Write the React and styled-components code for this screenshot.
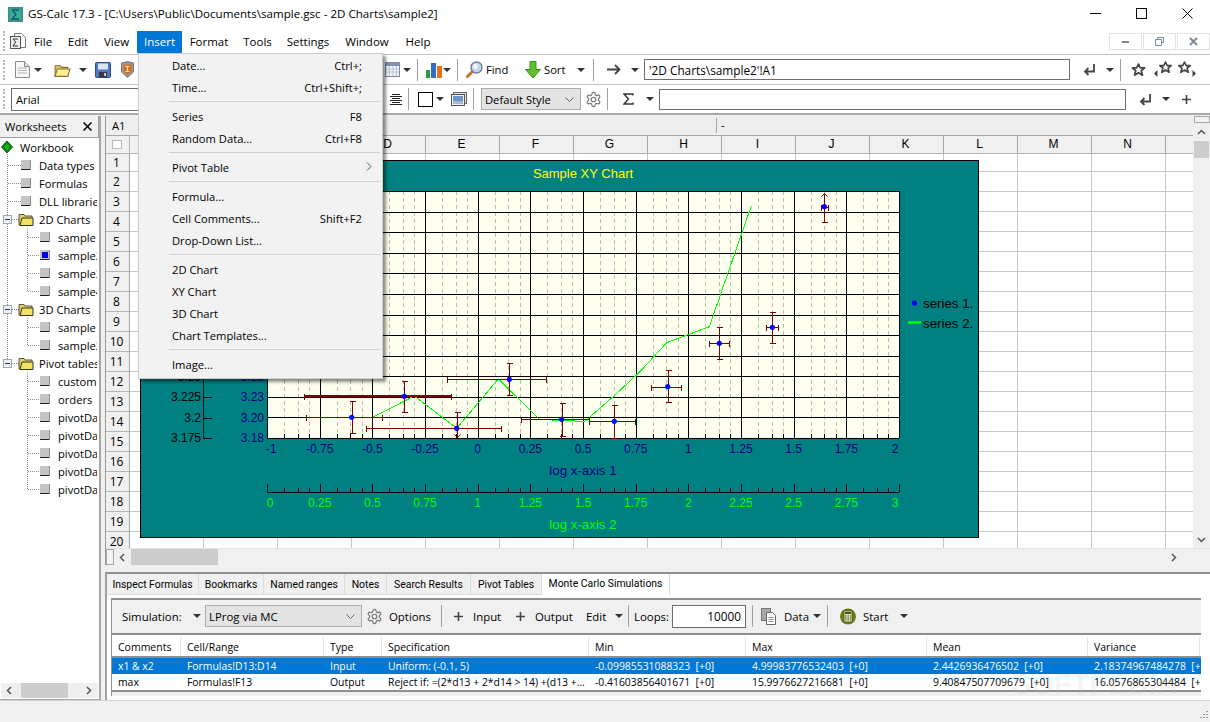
import React from "react";
import styled, { createGlobalStyle } from "styled-components";

const UI = '"Open Sans", "Noto Sans", sans-serif';

const GlobalStyle = createGlobalStyle`
  html, body { margin: 0; padding: 0; background: #f0f0f0; overflow: hidden; }
  body { font-family: ${UI}; font-size: 11.2px; color: #000; }
  * { box-sizing: border-box; }
`;

const Window = styled.div`
  position: relative;
  width: 1210px;
  height: 722px;
  display: flex;
  flex-direction: column;
  overflow: hidden;
  background: #f0f0f0;
`;

const TitleBar = styled.div`
  height: 28px;
  background: #fff;
  display: flex;
  align-items: center;
  padding-left: 8px;
`;
const TitleText = styled.span`
  margin-left: 5px;
  margin-top: -1px;
  font-size: 11.6px;
  flex: 1;
`;
const WinBtn = styled.span`
  width: 46px;
  height: 28px;
  display: flex;
  align-items: center;
  justify-content: center;
  margin-top: -2px;
`;

const MenuBar = styled.div`
  height: 27px;
  background: #fff;
  display: flex;
  align-items: center;
  border-bottom: 1px solid #c4c4c4;
  padding-left: 3px;
`;
const Handle = styled.span`
  width: 3px;
  height: 20px;
  border-left: 2px dotted #b5b5b5;
  margin-left: ${(p) => p.$ml || 0}px;
`;
const MenuItem = styled.span`
  height: 22px;
  margin-top: 1px;
  width: ${(p) => p.$w}px;
  display: flex;
  align-items: center;
  justify-content: center;
  background: ${(p) => (p.$active ? "#0078d7" : "transparent")};
  color: ${(p) => (p.$active ? "#fff" : "#000")};
  font-size: 11.5px;
`;
const MdiGroup = styled.div`
  margin-left: auto;
  display: flex;
  gap: 1px;
`;
const MdiBtn = styled.span`
  width: 33px;
  height: 17px;
  border: 1px solid #e3e3e3;
  display: flex;
  align-items: center;
  justify-content: center;
`;

const Toolbar = styled.div`
  height: 30px;
  background: #fff;
  display: flex;
  align-items: center;
  border-bottom: ${(p) => p.$line || "1px solid #c4c4c4"};
`;
const Tool = styled.span`
  display: inline-flex;
  align-items: center;
  justify-content: center;
  flex-shrink: 0;
  margin-left: ${(p) => p.$ml || 0}px;
  width: ${(p) => p.$w}px;
`;
const ToolText = styled.span`
  flex-shrink: 0;
  white-space: nowrap;
  margin-left: ${(p) => p.$ml || 0}px;
  width: ${(p) => p.$w}px;
`;
const Caret = styled.span`
  flex-shrink: 0;
  width: 0;
  height: 0;
  border-left: 4px solid transparent;
  border-right: 4px solid transparent;
  border-top: 4px solid #333;
  margin-left: ${(p) => p.$ml || 0}px;
`;
const Sep = styled.span`
  flex-shrink: 0;
  width: 1px;
  height: ${(p) => p.$h || 22}px;
  background: #a0a0a0;
  margin-left: ${(p) => p.$ml || 0}px;
`;
const TextBox = styled.div`
  flex-shrink: 0;
  margin-left: ${(p) => p.$ml || 0}px;
  width: ${(p) => p.$w}px;
  height: ${(p) => p.$h || 21}px;
  border: 1px solid #6e6e6e;
  background: #fff;
  display: flex;
  align-items: center;
  justify-content: ${(p) => (p.$right ? "flex-end" : "flex-start")};
  padding: 0 4px;
  font-size: ${(p) => p.$font || 11.2}px;
`;
const Combo = styled.div`
  flex-shrink: 0;
  margin-left: ${(p) => p.$ml || 0}px;
  width: ${(p) => p.$w}px;
  height: 22px;
  border: 1px solid #adadad;
  background: #e3e3e3;
  display: flex;
  align-items: center;
  justify-content: space-between;
  padding: 0 6px 0 3px;
`;

const Main = styled.div`
  height: 454px;
  display: flex;
  padding-top: 1px;
`;
const TreePanel = styled.div`
  width: 101px;
  flex-shrink: 0;
  background: #fff;
  border-right: 2px solid #a6a6a6;
  border-bottom: 1px solid #a6a6a6;
  overflow: hidden;
  margin-bottom: -131px;
  position: relative;
  z-index: 1;
  display: flex;
  flex-direction: column;
`;
const TreeHead = styled.div`
  height: 22px;
  flex-shrink: 0;
  background: #f0f0f0;
  display: flex;
  align-items: center;
  justify-content: space-between;
  padding: 0 6px 0 5px;
  border-bottom: 1px solid #a0a0a0;
  border-right: 1px solid #a0a0a0;
`;
const TreeList = styled.div`
  flex: 1;
  min-height: 0;
  margin-right: 2px;
  overflow: hidden;
`;
const TreeRow = styled.div`
  height: 18px;
  display: flex;
  align-items: center;
  white-space: nowrap;
`;
const Guide = styled.svg`
  flex-shrink: 0;
  display: block;
`;
const TreeScroll = styled.div`
  height: 15px;
  margin: 0 1px 1px;
  flex-shrink: 0;
  background: #efefef;
  display: flex;
  align-items: center;
`;
const TreeThumb = styled.span`
  width: 47px;
  height: 15px;
  background: #cdcdcd;
  margin: 0 12px 0 3px;
`;

const Sheet = styled.div`
  margin-left: 4px;
  width: 1105px;
  height: 449px;
  display: flex;
  flex-direction: column;
  border-left: 1px solid #9a9a9a;
  position: relative;
  background: #fff;
`;
const SheetTop = styled.div`
  flex: 1;
  display: flex;
  min-height: 0;
`;
const GridCol = styled.div`
  flex: 1;
  display: flex;
  flex-direction: column;
  min-width: 0;
`;
const RefBar = styled.div`
  height: 20px;
  flex-shrink: 0;
  background: #eeeeee;
  border-bottom: 1px solid #a6a6a6;
  display: flex;
  align-items: center;
`;
const RefName = styled.span`
  margin-left: 6px;
  width: 604px;
`;
const RefValue = styled.span`
  border-left: 1px solid #a6a6a6;
  padding-left: 4px;
  height: 15px;
  line-height: 14px;
`;
const ColHead = styled.div`
  height: 18px;
  flex-shrink: 0;
  display: flex;
  background: #f0f0f0;
  border-bottom: 1px solid #b5b5b5;
`;
const Corner = styled.span`
  width: 24px;
  flex-shrink: 0;
  border-right: 1px solid #b5b5b5;
  display: flex;
  align-items: center;
  justify-content: center;
  padding-right: 2px;
`;
const ColCell = styled.span`
  width: 74px;
  flex-shrink: 0;
  border-right: 1px solid #a6a6a6;
  display: flex;
  align-items: center;
  justify-content: center;
  font: 12px "Liberation Sans", sans-serif;
  padding: 0 2px 1px 0;
`;
const GridBody = styled.div`
  flex: 1;
  display: flex;
  min-height: 0;
  overflow: hidden;
`;
const RowHead = styled.div`
  width: 24px;
  flex-shrink: 0;
  background: #f0f0f0;
  border-right: 1px solid #a6a6a6;
`;
const RowNum = styled.div`
  height: ${(p) => p.$h}px;
  border-bottom: 1px solid #b5b5b5;
  display: flex;
  align-items: center;
  justify-content: center;
  font-size: 12px;
  padding-right: 2px;
`;
const Cells = styled.div`
  flex: 1;
  position: relative;
  background-color: #fff;
  background-image: linear-gradient(to right, transparent 73px, #c6c6c6 73px),
    linear-gradient(to bottom, transparent 19px, #c6c6c6 19px);
  background-size: 74px 20px;
  background-position: 0 -2px;
`;
const ChartBox = styled.svg`
  position: absolute;
  left: 10px;
  top: 6px;
  display: block;
`;
const VScroll = styled.div`
  width: 17px;
  flex-shrink: 0;
  background: #f0f0f0;
  display: flex;
  flex-direction: column;
  align-items: center;
`;
const ScrollGrip = styled.span`
  width: 16px;
  height: 7px;
  border: 1px solid #a6a6a6;
  background: #f4f4f4;
`;
const VThumb = styled.span`
  width: 15px;
  height: 17px;
  background: #cdcdcd;
`;
const Arrow = styled.span`
  height: 17px;
  width: 17px;
  flex-shrink: 0;
  display: flex;
  align-items: center;
  justify-content: center;
  margin-top: ${(p) => p.$mt || 0}px;
  margin-left: ${(p) => p.$ml || 0}px;
`;
const HScroll = styled.div`
  height: 17px;
  flex-shrink: 0;
  background: #f0f0f0;
  display: flex;
  align-items: center;
  border-top: 1px solid #e4e4e4;
`;
const HGrip = styled.span`
  width: 8px;
  height: 16px;
  border: 1px solid #a6a6a6;
  background: #f4f4f4;
`;
const HThumb = styled.span`
  width: 87px;
  height: 16px;
  background: #cdcdcd;
`;

const Lower = styled.div`
  margin-left: 105px;
  margin-top: 3px;
  width: 1105px;
  height: 128px;
  border-top: 2px solid #8f8f8f;
  border-left: 2px solid #a0a0a0;
  background: #fff;
  display: flex;
  flex-direction: column;
`;
const Tabs = styled.div`
  height: 21px;
  flex-shrink: 0;
  display: flex;
  align-items: stretch;
`;
const Tab = styled.span`
  width: ${(p) => p.$w}px;
  flex-shrink: 0;
  display: flex;
  align-items: center;
  justify-content: center;
  white-space: nowrap;
  font-family: Roboto, sans-serif;
  font-size: 10.4px;
  background: ${(p) => (p.$on ? "#fff" : "#f0f0f0")};
  border-right: 1px solid #dcdcdc;
  border-bottom: ${(p) => (p.$on ? "none" : "1px solid #dcdcdc")};
  padding-bottom: ${(p) => (p.$on ? 3 : 0)}px;
`;
const TabFill = styled.span`
  flex: 1;
  background: #fff;
`;
const SimPanel = styled.div`
  margin: 3px 0 0 4px;
  width: 1090px;
  height: 98px;
  border-top: 2px solid #8f8f8f;
  border-left: 1px solid #8f8f8f;
  display: flex;
  flex-direction: column;
  background: #f0f0f0;
`;
const SimBar = styled.div`
  height: 35px;
  flex-shrink: 0;
  display: flex;
  align-items: center;
  border-bottom: 2px solid #8f8f8f;
  padding-bottom: 1px;
  font-size: 11.4px;
`;
const TableHead = styled.div`
  height: 23px;
  flex-shrink: 0;
  display: flex;
  background: #fff;
  padding-top: 2px;
  border-bottom: 2px solid #8f8f8f;
`;
const HeadCell = styled.span`
  width: ${(p) => p.$w}px;
  flex-shrink: 0;
  display: flex;
  align-items: center;
  padding-left: 6px;
  font-size: 10.5px;
  border-right: 1px solid #e4e4e4;
`;
const DataRow = styled.div`
  height: 16px;
  flex-shrink: 0;
  display: flex;
  background: ${(p) => (p.$sel ? "#0078d7" : "#fff")};
  color: ${(p) => (p.$sel ? "#fff" : "#000")};
`;
const DataCell = styled.span`
  width: ${(p) => p.$w}px;
  flex-shrink: 0;
  display: flex;
  align-items: center;
  padding-left: 6px;
  font-size: 10.4px;
  white-space: pre;
  overflow: hidden;
`;
const TableEnd = styled.div`
  flex: 1;
  background: #f0f0f0;
  border-top: 2px solid #8f8f8f;
`;
const StatusBar = styled.div`
  flex: 1;
  border-top: 1px solid #d4d4d4;
  display: flex;
  justify-content: flex-end;
  align-items: flex-end;
  padding: 0 2px 2px 0;
`;

const MenuPopup = styled.div`
  position: absolute;
  left: 138px;
  top: 53px;
  width: 245px;
  height: 326px;
  background: #f2f2f2;
  border: 1px solid #cccccc;
  box-shadow: 3px 3px 3px rgba(0, 0, 0, 0.45);
  z-index: 5;
`;
const PopItem = styled.div`
  height: 22px;
  display: flex;
  align-items: center;
  justify-content: space-between;
  padding: 0 20px 0 33px;
  position: relative;
`;
const PopSep = styled.div`
  height: 1px;
  background: #d2d2d2;
  margin: 3px 2px 3px 30px;
`;
const SubArrow = styled.span`
  position: absolute;
  right: 10px;
  top: 6px;
  display: flex;
`;
const Watermark = styled.span`
  position: absolute;
  left: 1012px;
  top: 668px;
  font: bold 29px "Liberation Sans", sans-serif;
  color: rgba(190, 190, 190, 0.18);
  pointer-events: none;
`;

const AppIcon = () => (
  <svg width="15" height="15" viewBox="0 0 15 15">
    <rect width="15" height="15" fill="#2f9c84" stroke="#6a7a74" />
    <rect x="2" y="2" width="11" height="11" fill="#33b094" />
    <path d="M4 3h7M4 3l4 4.5L4 12h7" stroke="#1b4d7a" strokeWidth="1.3" fill="none" />
  </svg>
);
const DocSigma = () => (
  <svg width="16" height="17" viewBox="0 0 16 17">
    <path d="M4.5 .5h7l4 4v10h-11z" fill="#fff" stroke="#777" />
    <rect x=".5" y="3.5" width="10" height="12" fill="#eee" stroke="#555" />
    <path d="M3 6h5M3 6l2.6 3L3 13h5" stroke="#333" fill="none" />
  </svg>
);
const NewDoc = () => (
  <svg width="15" height="17" viewBox="0 0 15 17">
    <path d="M.5 .5h9l5 5v11H.5z" fill="#f7f7f7" stroke="#8a8a8a" />
    <path d="M9.5 .5v5h5" fill="#ddd" stroke="#8a8a8a" />
    <path d="M3 7h9M3 9.5h9M3 12h9" stroke="#b0b4bc" />
  </svg>
);
const FolderIcon = ({ w = 16, h = 13 }) => (
  <svg width={w} height={h} viewBox="0 0 16 13">
    <path d="M1 2.5h5l1 1.5h6v8H1z" fill="#e7cf5e" stroke="#85733a" />
    <path d="M3 5.5h12l-2 7H1z" fill="#fdf08f" stroke="#85733a" />
  </svg>
);
const SaveIcon = () => (
  <svg width="16" height="16" viewBox="0 0 16 16">
    <rect x=".5" y=".5" width="15" height="15" rx="1" fill="#4f78c0" stroke="#2d4a86" />
    <rect x="3" y="1.5" width="10" height="6" fill="#d9e4f4" />
    <rect x="4" y="10" width="8" height="5" fill="#39383e" />
    <rect x="9" y="11" width="2" height="3" fill="#ccc" />
  </svg>
);
const ShieldIcon = () => (
  <svg width="15" height="17" viewBox="0 0 15 17">
    <path d="M1.5 2 7.5.5l6 1.5v9l-6 5.5-6-5.5z" fill="#9a9a9a" stroke="#777" />
    <path d="M3.5 3.5h8v6.8l-4 3.7-4-3.7z" fill="#d96f1c" />
    <path d="M5.5 5.5h4M7.5 5.5v5M5.5 10.5h4" stroke="#f7e2c4" strokeWidth="1.2" />
  </svg>
);
const CalIcon = () => (
  <svg width="15" height="15" viewBox="0 0 15 15">
    <rect x=".5" y=".5" width="14" height="14" fill="#f4f6fa" stroke="#7f8da3" />
    <rect x="1" y="1" width="13" height="3" fill="#7f94b8" />
    <path d="M1 7h13M1 10h13M4.5 4v10M8 4v10M11.5 4v10" stroke="#b9c3d3" />
  </svg>
);
const BarsIcon = () => (
  <svg width="16" height="16" viewBox="0 0 16 16">
    <rect x="0" y="8" width="4" height="8" fill="#1e9e3c" />
    <rect x="5" y="1" width="5" height="15" fill="#2f6fc6" />
    <rect x="11" y="4" width="5" height="12" fill="#e8701a" />
  </svg>
);
const FindIcon = () => (
  <svg width="17" height="17" viewBox="0 0 17 17">
    <path d="M7 10 1.5 15.5" stroke="#c8741e" strokeWidth="3" strokeLinecap="round" />
    <circle cx="10.5" cy="6.5" r="5.5" fill="#c8d6ea" stroke="#6d7f99" strokeWidth="1.4" />
    <circle cx="9.5" cy="5.5" r="2.4" fill="#f2f6fb" />
  </svg>
);
const SortIcon = () => (
  <svg width="16" height="18" viewBox="0 0 16 18">
    <path d="M5 .5h6v8h4.5L8 17 .5 8.5H5z" fill="#5ec22e" stroke="#3a8a1a" />
  </svg>
);
const RightArrow = () => (
  <svg width="14" height="11" viewBox="0 0 14 11">
    <path d="M0 5.5h12M8 1l4.5 4.5L8 10" stroke="#444" strokeWidth="1.8" fill="none" />
  </svg>
);
const ReturnIcon = () => (
  <svg width="13" height="13" viewBox="0 0 13 13">
    <path d="M11 1v7.5H2M5.5 5 2 8.5 5.5 12" stroke="#444" strokeWidth="1.8" fill="none" />
  </svg>
);
const StarShape = ({ x = 0, y = 0 }) => (
  <path
    transform={`translate(${x} ${y})`}
    d="M6.5 1l1.7 3.6h4l-3.1 2.6 1.1 4.1-3.7-2.3-3.7 2.3 1.1-4.1L.8 4.6h4z"
    fill="none"
    stroke="#444"
    strokeWidth="1.6"
    strokeLinejoin="round"
  />
);
const StarIcon = () => (
  <svg width="15" height="14" viewBox="0 0 13 13">
    <StarShape />
  </svg>
);
const StarLeft = () => (
  <svg width="19" height="17" viewBox="0 0 19 17">
    <StarShape x="5" y="0" />
    <path d="M0 12.5l3.5-3.5v7z" fill="#444" />
  </svg>
);
const StarRight = () => (
  <svg width="19" height="17" viewBox="0 0 19 17">
    <StarShape x="1" y="0" />
    <path d="M19 12.5l-3.5-3.5v7z" fill="#444" />
  </svg>
);
const AlignIcon = () => (
  <svg width="12" height="11" viewBox="0 0 12 11">
    <path d="M2 .5h8M0 2.5h12M2 4.5h8M0 6.5h12M2 8.5h8M0 10.5h12" stroke="#222" />
  </svg>
);
const PictureIcon = () => (
  <svg width="16" height="14" viewBox="0 0 16 14">
    <rect x="2.5" y=".5" width="13" height="11" fill="#ddd" stroke="#666" />
    <rect x=".5" y="2.5" width="13" height="11" fill="#eee" stroke="#555" />
    <rect x="2" y="4" width="10" height="5" fill="#6e94cc" />
    <rect x="2" y="9" width="10" height="3" fill="#a9b9cc" />
  </svg>
);
const GearIcon = ({ size = 16 }) => (
  <svg width={size} height={size} viewBox="0 0 24 24" fill="none" stroke="#777" strokeWidth="1.7">
    <path d="M12.2 2h-.4a2 2 0 0 0-2 2v.2a2 2 0 0 1-1 1.7l-.4.3a2 2 0 0 1-2 0l-.2-.1a2 2 0 0 0-2.7.7l-.2.4a2 2 0 0 0 .7 2.7l.2.1a2 2 0 0 1 1 1.7v.6a2 2 0 0 1-1 1.7l-.2.1a2 2 0 0 0-.7 2.7l.2.4a2 2 0 0 0 2.7.7l.2-.1a2 2 0 0 1 2 0l.4.3a2 2 0 0 1 1 1.7v.2a2 2 0 0 0 2 2h.4a2 2 0 0 0 2-2v-.2a2 2 0 0 1 1-1.7l.4-.3a2 2 0 0 1 2 0l.2.1a2 2 0 0 0 2.7-.7l.2-.4a2 2 0 0 0-.7-2.7l-.2-.1a2 2 0 0 1-1-1.7v-.6a2 2 0 0 1 1-1.7l.2-.1a2 2 0 0 0 .7-2.7l-.2-.4a2 2 0 0 0-2.7-.7l-.2.1a2 2 0 0 1-2 0l-.4-.3a2 2 0 0 1-1-1.7V4a2 2 0 0 0-2-2z" />
    <circle cx="12" cy="12" r="3.2" />
  </svg>
);
const Chevron = () => (
  <svg width="9" height="5" viewBox="0 0 9 5">
    <path d="M.5 .5l4 4 4-4" stroke="#666" fill="none" />
  </svg>
);
const DataIcon = () => (
  <svg width="15" height="17" viewBox="0 0 15 17">
    <rect x=".5" y=".5" width="9" height="12" fill="#a8a8a8" stroke="#777" />
    <path d="M5.5 4.5h6l3 3v9h-9z" fill="#fff" stroke="#666" />
    <path d="M7.5 9.5h5M7.5 11.5h5M7.5 13.5h5" stroke="#888" />
  </svg>
);
const CalcIcon = () => (
  <svg width="16" height="17" viewBox="0 0 16 17">
    <circle cx="8" cy="8.5" r="8" fill="#6f7d16" />
    <rect x="4" y="3" width="8" height="11" fill="#d9dcc0" stroke="#3e460c" strokeWidth=".6" />
    <rect x="5" y="4" width="6" height="2" fill="#4d5a10" />
    <path d="M5 8h1.5M7.5 8H9M10 8h1M5 10h1.5M7.5 10H9M10 10h1M5 12h1.5M7.5 12H9M10 12h1" stroke="#4d5a10" />
  </svg>
);
const Plus = () => (
  <svg width="9" height="9" viewBox="0 0 9 9">
    <path d="M4.5 0v9M0 4.5h9" stroke="#444" strokeWidth="1.6" />
  </svg>
);
const Sigma = () => (
  <svg width="11" height="12" viewBox="0 0 11 12">
    <path d="M10 2.5V1H1l4.5 5L1 11h9V9.5" stroke="#333" strokeWidth="1.4" fill="none" />
  </svg>
);
const ArrowGlyph = ({ d }) => (
  <svg width="9" height="9" viewBox="0 0 9 9">
    <path d={d} stroke="#555" strokeWidth="1.5" fill="none" />
  </svg>
);

const GUIDE_DOTS = { stroke: "#8a8a8a", strokeWidth: 1, strokeDasharray: "1 1" };

const Square = ({ x, on }) => (
  <g>
    <rect x={x} y="4" width="10" height="10" fill="#c4c4c4" />
    <rect x={x} y="13" width="10" height="1" fill="#222" />
    <rect x={x + 9} y="4" width="1" height="10" fill="#8c8c8c" />
    {on && <rect x={x + 2} y="6" width="6" height="6" fill="#0000e0" />}
  </g>
);

// one row's connector lines and icon, so the labels stay in flow
const TreeGlyph = ({ kind, on, last, endRoot }) => {
  if (kind === "root") {
    return (
      <Guide width="20" height="18">
        <line x1="7.5" y1="14" x2="7.5" y2="18" {...GUIDE_DOTS} />
        <path d="M7 3l5.5 6L7 15 1.5 9z" fill="#0a8a0a" stroke="#065d06" />
        <path d="M7 6l2.7 3L7 12 4.3 9z" fill="#21b421" />
      </Guide>
    );
  }
  if (kind === "leaf") {
    return (
      <Guide width="39" height="18">
        <line x1="7.5" y1="0" x2="7.5" y2="18" {...GUIDE_DOTS} />
        <line x1="8" y1="9.5" x2="21" y2="9.5" {...GUIDE_DOTS} />
        <Square x={21} />
      </Guide>
    );
  }
  if (kind === "folder") {
    return (
      <Guide width="39" height="18">
        <line x1="7.5" y1="0" x2="7.5" y2={endRoot ? 5 : 18} {...GUIDE_DOTS} />
        <line x1="12" y1="9.5" x2="19" y2="9.5" {...GUIDE_DOTS} />
        <rect x="3.5" y="5.5" width="8" height="8" fill="#eef" stroke="#9aa" />
        <path d="M5 9.5h5" stroke="#335" />
        <g transform="translate(18 3)">
          <path d="M1 1.5h5l1 1.5h7v9H1z" fill="#e7cf5e" stroke="#555" />
          <path d="M4 5h11v7.5H2z" fill="#f3e25c" stroke="#333" />
        </g>
      </Guide>
    );
  }
  return (
    <Guide width="58" height="18">
      {!endRoot && <line x1="7.5" y1="0" x2="7.5" y2="18" {...GUIDE_DOTS} />}
      <line x1="27.5" y1="0" x2="27.5" y2={last ? 9 : 18} {...GUIDE_DOTS} />
      <line x1="28" y1="9.5" x2="40" y2="9.5" {...GUIDE_DOTS} />
      <Square x={40} on={on} />
    </Guide>
  );
};

const TREE = [
  { kind: "root", label: "Workbook" },
  { kind: "leaf", label: "Data types" },
  { kind: "leaf", label: "Formulas" },
  { kind: "leaf", label: "DLL libraries" },
  { kind: "folder", label: "2D Charts" },
  { kind: "child", label: "sample1" },
  { kind: "child", label: "sample2", on: true },
  { kind: "child", label: "sample3" },
  { kind: "child", label: "sample4", last: true },
  { kind: "folder", label: "3D Charts" },
  { kind: "child", label: "sample1" },
  { kind: "child", label: "sample2", last: true },
  { kind: "folder", label: "Pivot tables", endRoot: true },
  { kind: "child", label: "customers", endRoot: true },
  { kind: "child", label: "orders", endRoot: true },
  { kind: "child", label: "pivotData1", endRoot: true },
  { kind: "child", label: "pivotData2", endRoot: true },
  { kind: "child", label: "pivotData3", endRoot: true },
  { kind: "child", label: "pivotData4", endRoot: true },
  { kind: "child", label: "pivotData5", endRoot: true, last: true },
];

const MENU = [
  ["Date...", "Ctrl+;"],
  ["Time...", "Ctrl+Shift+;"],
  null,
  ["Series", "F8"],
  ["Random Data...", "Ctrl+F8"],
  null,
  ["Pivot Table", "", true],
  null,
  ["Formula..."],
  ["Cell Comments...", "Shift+F2"],
  ["Drop-Down List..."],
  null,
  ["2D Chart"],
  ["XY Chart"],
  ["3D Chart"],
  ["Chart Templates..."],
  null,
  ["Image..."],
];

const TOP_MENUS = [
  ["File", 34],
  ["Edit", 36],
  ["View", 41],
  ["Insert", 45, true],
  ["Format", 54],
  ["Tools", 43],
  ["Settings", 58],
  ["Window", 60],
  ["Help", 42],
];

const COL_WIDTHS = [69, 143, 58, 207, 157, 181, 161, 112];
const TABLE_HEAD = ["Comments", "Cell/Range", "Type", "Specification", "Min", "Max", "Mean", "Variance"];
const TABLE_ROWS = [
  ["x1 & x2", "Formulas!D13:D14", "Input", "Uniform: (-0.1, 5)", "-0.09985531088323  [+0]", "4.99983776532403  [+0]", "2.4426936476502  [+0]", "2.18374967484278  [+0]"],
  ["max", "Formulas!F13", "Output", "Reject if: =(2*d13 + 2*d14 > 14) +(d13 +...", "-0.41603856401671  [+0]", "15.9976627216681  [+0]", "9.40847507709679  [+0]", "16.0576865304484  [+0]"],
];

// chart geometry, page coordinates
const PX0 = 267;
const PX1 = 899;
const PY0 = 191;
const PY1 = 438;
const STEP_X = (PX1 - PX0) / 12;
const STEP_Y = (PY1 - PY0) / 12;
const MINOR = [0.32, 0.58, 0.8];
const majorX = Array.from({ length: 13 }, (_, i) => PX0 + i * STEP_X);
const majorY = Array.from({ length: 13 }, (_, i) => PY0 + i * STEP_Y);
const minorX = majorX.slice(0, 12).flatMap((x) => MINOR.map((m) => x + m * STEP_X));
const snap = (v) => Math.round(v) + 0.5;

const AXIS1 = ["-1", "-0.75", "-0.5", "-0.25", "0", "0.25", "0.5", "0.75", "1", "1.25", "1.5", "1.75", "2"];
const AXIS2 = ["0", "0.25", "0.5", "0.75", "1", "1.25", "1.5", "1.75", "2", "2.25", "2.5", "2.75", "3"];

const POINTS = [
  { x: 351.7, y: 417.3, x0: 305.7, x1: 381.7, y0: 401.3, y1: 433.3 },
  { x: 404.3, y: 396.3, x0: 303.7, x1: 450.7, y0: 380.7, y1: 412.3, thick: true },
  { x: 456.7, y: 428.3, x0: 366.3, x1: 500.7, y0: 412.3, y1: 437, down: true },
  { x: 509.3, y: 379.3, x0: 447.3, x1: 545.7, y0: 363.3, y1: 395.3 },
  { x: 561.7, y: 419.3, x0: 521.3, x1: 589.3, y0: 403.3, y1: 435.7 },
  { x: 614.3, y: 421.3, x0: 589.3, x1: 635, y0: 405.3, y1: 437.7 },
  { x: 667.7, y: 386.7, x0: 651.3, x1: 680.7, y0: 370.3, y1: 402.3 },
  { x: 719.3, y: 343.3, x0: 709.3, x1: 728.7, y0: 327.3, y1: 359.3 },
  { x: 772.3, y: 327.3, x0: 766.3, x1: 777.7, y0: 311.7, y1: 343.3 },
  { x: 824.3, y: 206.7, x0: 821.3, x1: 827.7, y0: 193.3, y1: 222.3, up: true },
];
const LINE = "372.7,417.3 414.3,396 456.7,428.3 498.3,379 539.3,419 558,420.5 585,421.3 615,395 640,371.7 666.7,342.7 709.3,326.7 751.3,206";

const ChartText = styled.text`
  font-family: "Liberation Sans", sans-serif;
  font-size: ${(p) => p.$size || 12}px;
`;

const ErrorBar = ({ p }) => {
  const cx = snap(p.x);
  const cy = snap(p.y);
  const y0 = snap(p.y0);
  const y1 = snap(p.y1);
  return (
    <g stroke="#800000" fill="none" shapeRendering="crispEdges">
      <line x1={p.x0} x2={p.x1} y1={p.thick ? cy - 0.5 : cy} y2={p.thick ? cy - 0.5 : cy} strokeWidth={p.thick ? 2 : 1} />
      <line x1={snap(p.x0)} x2={snap(p.x0)} y1={cy - 3} y2={cy + 3} />
      <line x1={snap(p.x1)} x2={snap(p.x1)} y1={cy - 3} y2={cy + 3} />
      <line x1={cx} x2={cx} y1={y0} y2={y1} />
      {!p.up && <line x1={cx - 3} x2={cx + 3} y1={y0} y2={y0} />}
      {!p.down && <line x1={cx - 3} x2={cx + 3} y1={y1} y2={y1} />}
      {p.up && <path d={`M${cx - 3} ${y0 + 3}l3-3 3 3`} shapeRendering="auto" />}
      {p.down && <path d={`M${cx - 3} ${y1 - 3}l3 3 3-3`} shapeRendering="auto" />}
    </g>
  );
};

const Chart = () => (
  <ChartBox width="839" height="378" viewBox="140 160 839 378">
    <rect x="140.5" y="160.5" width="838" height="377" fill="#008080" stroke="#000" />
    <ChartText x="583" y="178" textAnchor="middle" fill="#ffff00" $size={13}>Sample XY Chart</ChartText>
    <rect x={PX0} y={PY0} width={PX1 - PX0} height={PY1 - PY0} fill="#fffff0" />
    <g shapeRendering="crispEdges">
      {minorX.map((x) => (
        <line key={x} x1={snap(x)} x2={snap(x)} y1={PY0} y2={PY1} stroke="#bdbdb4" strokeDasharray="4 3" />
      ))}
      {majorX.map((x) => (
        <line key={x} x1={snap(x)} x2={snap(x)} y1={PY0} y2={PY1} stroke="#000" />
      ))}
      {majorY.map((y) => (
        <line key={y} x1={PX0} x2={PX1} y1={snap(y)} y2={snap(y)} stroke="#000" />
      ))}
      {minorX.map((x) => (
        <line key={x} x1={snap(x)} x2={snap(x)} y1={PY1 - 4} y2={PY1} stroke="#000" />
      ))}
    </g>

    <polyline points={LINE} fill="none" stroke="#00ff00" strokeWidth="1" shapeRendering="crispEdges" />

    {POINTS.map((p) => (
      <ErrorBar key={p.x} p={p} />
    ))}
    {POINTS.map((p) => (
      <circle key={p.x} cx={p.x} cy={p.y} r="2.6" fill="#0000ff" />
    ))}

    {/* left axes */}
    <line x1="203.5" x2="203.5" y1="340" y2="439" stroke="#000" />
    {[438, 417.5, 397, 376].map((y) => (
      <line key={y} x1="203" x2="212" y1={snap(y)} y2={snap(y)} stroke="#000" />
    ))}
    {[["3.175", 438], ["3.2", 418], ["3.225", 397], ["3.25", 377]].map(([t, y]) => (
      <ChartText key={t} x="201" y={y + 4} textAnchor="end" fill="#000">{t}</ChartText>
    ))}
    {[["3.18", 438], ["3.20", 418], ["3.23", 397], ["3.25", 377]].map(([t, y]) => (
      <ChartText key={t} x="264" y={y + 4} textAnchor="end" fill="#000080">{t}</ChartText>
    ))}

    {/* x axes */}
    {AXIS1.map((t, i) => (
      <ChartText key={t} x={i === 0 ? 271 : i === 12 ? 895 : majorX[i]} y="453" textAnchor="middle" fill="#000080">{t}</ChartText>
    ))}
    <ChartText x="583" y="475" textAnchor="middle" fill="#000080" $size={13.3}>log x-axis 1</ChartText>

    <line x1={PX0} x2={PX1} y1="492.5" y2="492.5" stroke="#000" />
    <g shapeRendering="crispEdges">
      {majorX.map((x) => (
        <line key={x} x1={snap(x)} x2={snap(x)} y1="484" y2="492" stroke="#000" />
      ))}
      {minorX.map((x) => (
        <line key={x} x1={snap(x)} x2={snap(x)} y1="488" y2="492" stroke="#000" />
      ))}
    </g>
    {AXIS2.map((t, i) => (
      <ChartText key={t} x={i === 0 ? 270 : i === 12 ? 895 : majorX[i]} y="507" textAnchor="middle" fill="#00ff00">{t}</ChartText>
    ))}
    <ChartText x="583" y="529" textAnchor="middle" fill="#00ff00" $size={13.3}>log x-axis 2</ChartText>

    {/* legend */}
    <circle cx="914.5" cy="303" r="2.6" fill="#0000ff" />
    <ChartText x="923" y="308" fill="#000" $size={13.3}>series 1.</ChartText>
    <line x1="908" x2="921" y1="322.5" y2="322.5" stroke="#00ff00" strokeWidth="2.6" />
    <ChartText x="923" y="328" fill="#000" $size={13.3}>series 2.</ChartText>
  </ChartBox>
);

export default function App() {
  const rows = Array.from({ length: 20 }, (_, i) => i + 1);
  return (
    <Window>
      <GlobalStyle />

      <TitleBar>
        <AppIcon />
        <TitleText>GS-Calc 17.3 - [C:\Users\Public\Documents\sample.gsc - 2D Charts\sample2]</TitleText>
        <WinBtn>
          <svg width="11" height="1"><rect width="11" height="1" fill="#000" /></svg>
        </WinBtn>
        <WinBtn>
          <svg width="11" height="11"><rect x=".5" y=".5" width="10" height="10" fill="none" stroke="#000" /></svg>
        </WinBtn>
        <WinBtn>
          <svg width="11" height="11"><path d="M.5 .5l10 10M10.5 .5l-10 10" stroke="#000" /></svg>
        </WinBtn>
      </TitleBar>

      <MenuBar>
        <Handle />
        <Tool $ml={4} $w={16}><DocSigma /></Tool>
        {TOP_MENUS.map(([t, w, on]) => (
          <MenuItem key={t} $w={w} $active={on}>{t}</MenuItem>
        ))}
        <MdiGroup>
          <MdiBtn><svg width="7" height="3"><rect y="1" width="7" height="2" fill="#7c8a96" /></svg></MdiBtn>
          <MdiBtn><svg width="9" height="9"><path d="M2.5 2.5v-2h6v5h-2M.5 2.5h6v6h-6z" fill="none" stroke="#7c8a96" /></svg></MdiBtn>
          <MdiBtn><svg width="9" height="9"><path d="M1 1l7 7M8 1L1 8" stroke="#7c8a96" strokeWidth="2" /></svg></MdiBtn>
        </MdiGroup>
      </MenuBar>

      <Toolbar>
        <Handle $ml={3} />
        <Tool $ml={8} $w={16}><NewDoc /></Tool>
        <Caret $ml={4} />
        <Tool $ml={12} $w={17}><FolderIcon w={17} h={14} /></Tool>
        <Caret $ml={8} />
        <Tool $ml={8} $w={16}><SaveIcon /></Tool>
        <Tool $ml={9} $w={15}><ShieldIcon /></Tool>
        <Tool $ml={250} $w={15}><CalIcon /></Tool>
        <Caret $ml={3} />
        <Sep $ml={6} />
        <Tool $ml={8} $w={16}><BarsIcon /></Tool>
        <Caret $ml={1} />
        <Sep $ml={6} />
        <Tool $ml={8} $w={17}><FindIcon /></Tool>
        <ToolText $ml={3} $w={23}>Find</ToolText>
        <Tool $ml={16} $w={16}><SortIcon /></Tool>
        <ToolText $ml={3} $w={22}>Sort</ToolText>
        <Caret $ml={11} />
        <Sep $ml={8} />
        <Tool $ml={13} $w={14}><RightArrow /></Tool>
        <Caret $ml={10} />
        <TextBox $ml={5} $w={426} $font={11.8}>'2D Charts\sample2'!A1</TextBox>
        <Tool $ml={12} $w={14}><ReturnIcon /></Tool>
        <Caret $ml={10} />
        <Sep $ml={6} />
        <Tool $ml={10} $w={15}><StarIcon /></Tool>
        <Tool $ml={8} $w={19}><StarLeft /></Tool>
        <Tool $ml={4} $w={19}><StarRight /></Tool>
      </Toolbar>

      <Toolbar $line="2px solid #a8a8a8">
        <Handle $ml={3} />
        <TextBox $ml={5} $w={132} $h={23}>Arial</TextBox>
        <Tool $ml={247} $w={12}><AlignIcon /></Tool>
        <Sep $ml={6} />
        <Tool $ml={9} $w={15}><svg width="15" height="15"><rect x=".5" y=".5" width="14" height="14" fill="#fff" stroke="#000" /></svg></Tool>
        <Caret $ml={3} />
        <Tool $ml={7} $w={16}><PictureIcon /></Tool>
        <Sep $ml={6} />
        <Combo $ml={7} $w={100}>Default Style<Chevron /></Combo>
        <Tool $ml={4} $w={17}><GearIcon size={17} /></Tool>
        <Sep $ml={5} />
        <Tool $ml={15} $w={11}><Sigma /></Tool>
        <Caret $ml={12} />
        <TextBox $ml={5} $w={467}></TextBox>
        <Tool $ml={12} $w={14}><ReturnIcon /></Tool>
        <Caret $ml={10} />
        <Tool $ml={11} $w={10}><Plus /></Tool>
      </Toolbar>

      <Main>
        <TreePanel>
          <TreeHead>
            Worksheets
            <svg width="9" height="9"><path d="M.5 .5l8 8M8.5 .5l-8 8" stroke="#000" strokeWidth="1.5" /></svg>
          </TreeHead>
          <TreeList>
            {TREE.map((n, i) => (
              <TreeRow key={i}>
                <TreeGlyph {...n} />
                {n.label}
              </TreeRow>
            ))}
          </TreeList>
          <TreeScroll>
            <Arrow><ArrowGlyph d="M6 1L2.5 4.5 6 8" /></Arrow>
            <TreeThumb />
            <Arrow><ArrowGlyph d="M3 1l3.5 3.5L3 8" /></Arrow>
          </TreeScroll>
        </TreePanel>

        <Sheet>
          <SheetTop>
            <GridCol>
              <RefBar>
                <RefName>A1</RefName>
                <RefValue>-</RefValue>
              </RefBar>
              <ColHead>
                <Corner>
                  <svg width="10" height="9"><rect x=".5" y=".5" width="9" height="8" fill="#fff" stroke="#bbb" /></svg>
                </Corner>
                {"ABCDEFGHIJKLMN".split("").map((c) => (
                  <ColCell key={c}>{c}</ColCell>
                ))}
              </ColHead>
              <GridBody>
                <RowHead>
                  {rows.map((r) => (
                    <RowNum key={r} $h={r === 1 ? 18 : 20}>{r}</RowNum>
                  ))}
                </RowHead>
                <Cells>
                  <Chart />
                </Cells>
              </GridBody>
            </GridCol>
            <VScroll>
              <ScrollGrip />
              <Arrow $mt={1}><ArrowGlyph d="M1 6l3.5-3.5L8 6" /></Arrow>
              <VThumb />
              <Arrow $mt={373}><ArrowGlyph d="M1 3l3.5 3.5L8 3" /></Arrow>
            </VScroll>
          </SheetTop>
          <HScroll>
            <HGrip />
            <Arrow><ArrowGlyph d="M6 1L2.5 4.5 6 8" /></Arrow>
            <HThumb />
            <Arrow $ml={947}><ArrowGlyph d="M3 1l3.5 3.5L3 8" /></Arrow>
          </HScroll>
        </Sheet>
      </Main>

      <Lower>
        <Tabs>
          <Tab $w={92}>Inspect Formulas</Tab>
          <Tab $w={65}>Bookmarks</Tab>
          <Tab $w={81}>Named ranges</Tab>
          <Tab $w={42}>Notes</Tab>
          <Tab $w={84}>Search Results</Tab>
          <Tab $w={71}>Pivot Tables</Tab>
          <Tab $w={128} $on>Monte Carlo Simulations</Tab>
          <TabFill />
        </Tabs>
        <SimPanel>
          <SimBar>
            <ToolText $ml={10} $w={66}>Simulation:</ToolText>
            <Caret $ml={5} />
            <Combo $ml={4} $w={157}>LProg via MC<Chevron /></Combo>
            <Tool $ml={4} $w={17}><GearIcon size={17} /></Tool>
            <ToolText $ml={6} $w={44}>Options</ToolText>
            <Sep $ml={8} />
            <Tool $ml={11} $w={10}><Plus /></Tool>
            <ToolText $ml={10} $w={30}>Input</ToolText>
            <Tool $ml={12} $w={10}><Plus /></Tool>
            <ToolText $ml={10} $w={40}>Output</ToolText>
            <ToolText $ml={11} $w={22}>Edit</ToolText>
            <Caret $ml={7} />
            <Sep $ml={5} />
            <ToolText $ml={5} $w={32}>Loops:</ToolText>
            <TextBox $ml={6} $w={74} $h={23} $right $font={11.8}>10000</TextBox>
            <Sep $ml={6} />
            <Tool $ml={8} $w={15}><DataIcon /></Tool>
            <ToolText $ml={8} $w={26}>Data</ToolText>
            <Caret $ml={3} />
            <Sep $ml={6} />
            <Tool $ml={12} $w={16}><CalcIcon /></Tool>
            <ToolText $ml={7} $w={30}>Start</ToolText>
            <Caret $ml={7} />
          </SimBar>
          <TableHead>
            {TABLE_HEAD.map((h, i) => (
              <HeadCell key={h} $w={COL_WIDTHS[i]}>{h}</HeadCell>
            ))}
          </TableHead>
          <DataRow $sel>
            {TABLE_ROWS[0].map((t, i) => (
              <DataCell key={i} $w={COL_WIDTHS[i]}>{t}</DataCell>
            ))}
          </DataRow>
          <DataRow>
            {TABLE_ROWS[1].map((t, i) => (
              <DataCell key={i} $w={COL_WIDTHS[i]}>{t}</DataCell>
            ))}
          </DataRow>
          <TableEnd />
        </SimPanel>
      </Lower>

      <StatusBar>
        <svg width="10" height="10">
          <path d="M9 1v1M6 4v1M9 4v1M3 7v1M6 7v1M9 7v1" stroke="#a0a0a0" strokeWidth="2" />
        </svg>
      </StatusBar>

      <MenuPopup>
        {MENU.map((m, i) =>
          m ? (
            <PopItem key={i}>
              <span>{m[0]}</span>
              <span>{m[1]}</span>
              {m[2] && (
                <SubArrow>
                  <svg width="6" height="9"><path d="M1 .5l4 4-4 4" fill="none" stroke="#555" /></svg>
                </SubArrow>
              )}
            </PopItem>
          ) : (
            <PopSep key={i} />
          )
        )}
      </MenuPopup>
      <Watermark>SOFTPEDIA</Watermark>
    </Window>
  );
}
